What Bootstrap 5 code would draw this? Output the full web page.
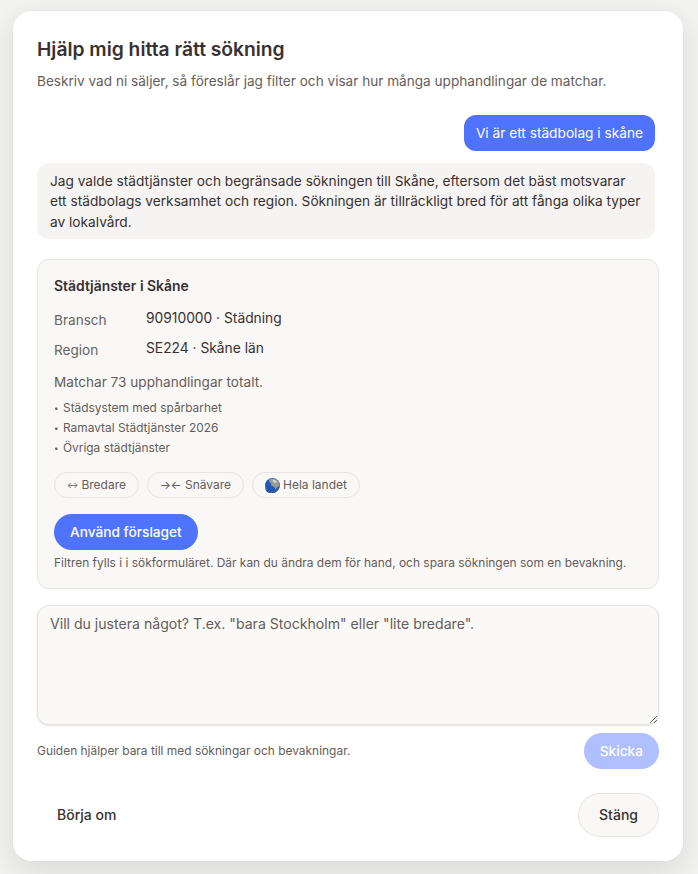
<!doctype html>
<html lang="sv"><head><meta charset="utf-8"><title>Guide</title>
<link href="https://cdn.jsdelivr.net/npm/bootstrap@5.3.0/dist/css/bootstrap.min.css" rel="stylesheet">
<style>
html,body{height:100%}
body{background:#f2f2f1;font-family:Inter,"Noto Sans",sans-serif;color:#38312f;overflow:hidden}
.guide-wrap{padding:11px 15px 13px 13px;height:874px}
.guide-box{width:670px;height:850px;background:#fff;border-radius:18px;border:1px solid #fff;box-shadow:0 0 0 1px rgba(0,0,0,.02),0 10px 30px rgba(0,0,0,.1);padding:23px 24px 0 23px}
.guide-title{font-size:19.25px;font-weight:600;line-height:28px;margin:0 0 8px}
.guide-sub{font-size:13.6px;line-height:20px;color:#655d5a;margin:0 0 24px}
.msg-user{background:#4f73ff;color:#fff;font-size:13.7px;line-height:20px;padding:8px 12px;border-radius:12px}
.msg-bot{background:#f5f4f3;font-size:13.7px;line-height:20.4px;padding:8px 13px 7px;border-radius:12px;margin-top:12px;width:618px}
.sug{background:#f9f8f7;border:1px solid #e6e4e2;border-radius:12px;margin-top:20px;padding:16px;width:622px;height:330px}
.sug-title{font-size:13.95px;font-weight:600;line-height:20px;margin-bottom:12px}
.sug-row{display:flex;font-size:13.8px;line-height:20px;height:30px}
.sug-key{width:92px;font-size:13.6px;color:#6a625f;padding-top:2px}
.sug-match{font-size:13.6px;line-height:20px;color:#655d5a;margin-top:4px}
.sug-list{font-size:11.9px;line-height:20px;color:#655d5a;margin:6px 0 14px}
.dot{display:inline-block;width:9px;font-size:8px;vertical-align:1px}
.pill{font-size:12px;line-height:16px;padding:4px 12px;height:26px;border:1px solid #e6e4e2;border-radius:999px;color:#655d5a;background:#f9f8f7;display:inline-flex;align-items:center}
.arw{font-size:8.5px;margin-right:3px}
.arw2{font-size:11.5px;margin-right:4px;letter-spacing:-.5px}
.pill svg{flex:none;margin-right:3px}
.btn-main{background:#4f73ff;color:#fff;font-size:13.7px;font-weight:500;line-height:20px;padding:8px 16px;border-radius:18px;border:0;margin-top:16px;display:block}
.sug-note{font-size:11.95px;line-height:18px;color:#655d5a;margin-top:4px}
.ask{display:block;width:622px;height:120px;margin-top:16px;background:#faf9f7;border:1px solid #e6e4e2;border-radius:12px;padding:8px 12px;font-size:14.1px;line-height:20px;color:#38312f;box-shadow:0 1px 2px rgba(0,0,0,.12);font-family:inherit}
.ask::placeholder{color:#655d5a;opacity:1}
.send-row{width:622px;margin-top:8px}
.send-note{font-size:11.95px;color:#655d5a;line-height:18px}
.btn-send{background:#b0bfff;color:#fff;font-size:13.7px;font-weight:500;line-height:20px;padding:8px 16px;border-radius:18px;border:0}
.foot-row{width:622px;margin-top:24px}
.btn-plain{background:transparent;border:0;font-size:14px;font-weight:500;color:#38312f;padding:0 20px 2px;height:44px}
.btn-close-guide{background:#f9f8f7;border:1px solid #e6e4e2;border-radius:22px;font-size:14px;font-weight:500;color:#38312f;padding:0 20px 2px;height:44px}
</style></head>
<body>
<div class="guide-wrap">
<div class="guide-box" role="dialog">
<h1 class="guide-title">Hjälp mig hitta rätt sökning</h1>
<p class="guide-sub">Beskriv vad ni säljer, så föreslår jag filter och visar hur många upphandlingar de matchar.</p>
<div class="d-flex justify-content-end" style="width:618px"><div class="msg-user">Vi är ett städbolag i skåne</div></div>
<div class="msg-bot">Jag valde städtjänster och begränsade sökningen till Skåne, eftersom det bäst motsvarar ett städbolags verksamhet och region. Sökningen är tillräckligt bred för att fånga olika typer av lokalvård.</div>
<div class="sug">
<div class="sug-title">Städtjänster i Skåne</div>
<div class="sug-row"><div class="sug-key">Bransch</div><div>90910000 · Städning</div></div>
<div class="sug-row"><div class="sug-key">Region</div><div>SE224 · Skåne län</div></div>
<div class="sug-match">Matchar 73 upphandlingar totalt.</div>
<div class="sug-list"><div><span class="dot">•</span>Städsystem med spårbarhet</div><div><span class="dot">•</span>Ramavtal Städtjänster 2026</div><div><span class="dot">•</span>Övriga städtjänster</div></div>
<div class="d-flex gap-2">
<span class="pill"><span class="arw">↔</span>Bredare</span>
<span class="pill"><span class="arw2">→←</span>Snävare</span>
<span class="pill"><svg width="15" height="15" viewBox="0 0 14 14"><circle cx="7" cy="7" r="7" fill="#2558b5"/><path d="M4.500 .6 9.800 .7 13.200 4 13.600 7.500 11.500 8.500 9.800 11 8.700 8.500 6 7.200 5.500 5 3.600 3Z" fill="#9a9a96"/><path d="M6.500 1.500 10 2 11.500 4.500 8.500 4.500Z" fill="#d8d6d0"/><path d="M8.500 12 10.500 10.500 11 11.800 9.500 13Z" fill="#5d5a50"/><path d="M.3 8A7 7 0 0 0 7 14 7 7 0 0 0 10 13.300 6 6 0 0 1 .3 8Z" fill="#173c8a"/></svg>Hela landet</span>
</div>
<button class="btn-main" type="button">Använd förslaget</button>
<div class="sug-note">Filtren fylls i i sökformuläret. Där kan du ändra dem för hand, och spara sökningen som en bevakning.</div>
</div>
<textarea class="ask" placeholder="Vill du justera något? T.ex. &quot;bara Stockholm&quot; eller &quot;lite bredare&quot;."></textarea>
<div class="send-row d-flex justify-content-between align-items-center">
<div class="send-note">Guiden hjälper bara till med sökningar och bevakningar.</div>
<button class="btn-send" type="button">Skicka</button>
</div>
<div class="foot-row d-flex justify-content-between align-items-center">
<button class="btn-plain" type="button">Börja om</button>
<button class="btn-close-guide" type="button">Stäng</button>
</div>
</div>
</div>
<script src="https://cdn.jsdelivr.net/npm/bootstrap@5.3.0/dist/js/bootstrap.bundle.min.js"></script>
</body></html>
